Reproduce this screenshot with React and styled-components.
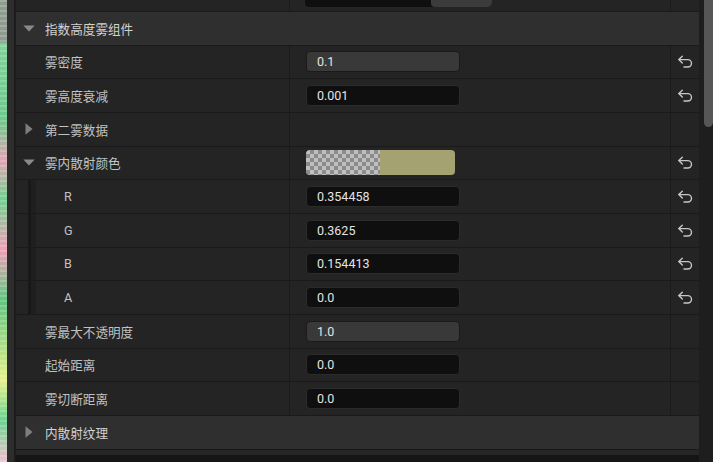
import React from "react";
import styled, { createGlobalStyle } from "styled-components";

const Global = createGlobalStyle`
  html, body { margin: 0; padding: 0; background: #151515; overflow: hidden; }
  * { box-sizing: border-box; }
`;

const Shell = styled.div`
  display: flex;
  width: 713px;
  height: 462px;
  font-family: Roboto, "Noto Sans CJK SC", "Noto Sans", sans-serif;
  font-size: 12.6px;
  color: #c2c2c2;
  overflow: hidden;
`;

const Viewport = styled.div`
  width: 7px;
  flex: none;
  background:
    repeating-linear-gradient(180deg, rgba(255,255,255,0.18) 0 2px, transparent 2px 5px),
    linear-gradient(180deg, #8e9c8f 0, #8e9c8f 42px, #7fd39a 44px, #6cc98a 120px,
      #e2a5b5 160px, #72d08f 200px, #f0a0b8 250px, #5fc67f 300px, #e8f08a 380px, #6ad490 420px, #f1c0d0 462px);
`;

const Gutter = styled.div`
  width: 9px;
  flex: none;
  background: #2d2d2d;
  border-right: 2px solid #1b1b1b;
`;

const Panel = styled.div`
  width: 683px;
  flex: none;
  display: flex;
  flex-direction: column;
  background: #151515;
`;

const Row = styled.div`
  display: grid;
  grid-template-columns: 274px 381px 28px;
  height: ${(p) => p.$h || "33.667px"};
  background: #242424;
  border-bottom: 1px solid #1a1a1a;
  flex: none;
`;

const HeaderRow = styled.div`
  display: flex;
  align-items: center;
  height: 33.667px;
  background: #2f2f2f;
  border-bottom: 1px solid #1a1a1a;
  flex: none;
  color: #d2d2d2;
`;

const Expander = styled.span`
  width: 29px;
  flex: none;
  display: flex;
  align-items: center;
  justify-content: flex-start;
  padding-left: ${(p) => (p.$open ? "7px" : "9px")};
`;

const NameCell = styled.div`
  display: flex;
  align-items: center;
  border-right: 1px solid #1b1b1b;
  padding-left: ${(p) => (p.$indent || p.$tree ? "0" : "29px")};
  overflow: hidden;
`;

const Stripe = styled.span`
  align-self: stretch;
  width: 8px;
  margin-left: 12px;
  margin-right: 28px;
  background: #1f1f1f;
  border-left: 3px solid #181818;
`;

const ValueCell = styled.div`
  display: flex;
  align-items: ${(p) => (p.$bottom ? "flex-end" : "center")};
  padding-left: 16px;
  padding-bottom: ${(p) => (p.$bottom ? "4px" : "0")};
  border-right: 1px solid #1b1b1b;
  overflow: hidden;
`;

const ResetCell = styled.div`
  display: flex;
  align-items: center;
  justify-content: center;
  padding-left: 1px;
`;

const NumField = styled.div`
  width: 154px;
  height: 21px;
  border-radius: 4px;
  display: flex;
  align-items: center;
  padding-left: 10px;
  font-family: Roboto, "Noto Sans", sans-serif;
  font-size: 12.5px;
  color: #e4e4e4;
  background: ${(p) => (p.$slider ? "#393939" : "#0f0f0f")};
  border: 1px solid ${(p) => (p.$slider ? "#1a1a1a" : "#2b2b2b")};
`;

const Swatch = styled.div`
  width: 149px;
  height: 25px;
  border-radius: 4px;
  overflow: hidden;
  display: flex;
`;

const Checker = styled.div`
  width: 74px;
  background-color: #bfbfbf;
  background-image: conic-gradient(#8b8b8b 25%, transparent 0 50%, #8b8b8b 0 75%, transparent 0);
  background-size: 8px 8px;
`;

const Solid = styled.div`
  flex: 1;
  background: ${(p) => p.$color};
`;

const Segmented = styled.div`
  width: 187px;
  height: 22px;
  margin-left: -1px;
  border-radius: 4px;
  background: #0f0f0f;
  display: flex;
  overflow: hidden;
`;

const Segment = styled.div`
  flex: ${(p) => (p.$active ? "0 0 61px" : "1")};
  background: ${(p) => (p.$active ? "#3b3b3b" : "transparent")};
  border-radius: ${(p) => (p.$active ? "4px" : "0")};
`;

const Filler = styled.div`
  height: 5px;
  background: #262626;
  flex: none;
`;

const Scrollbar = styled.div`
  width: 14px;
  flex: none;
  background: #1e1e1e;
  display: flex;
  justify-content: flex-end;
`;

const Thumb = styled.div`
  width: 9px;
  height: 127px;
  background: #565656;
  border-radius: 0 0 5px 5px;
`;

const Label = styled.span`
  white-space: nowrap;
`;

function TriDown() {
  return (
    <svg width="12" height="7" viewBox="0 0 12 7">
      <path d="M0.3 0.5 H11.7 L6 6.6 Z" fill="#8a8a8a" />
    </svg>
  );
}

function TriRight() {
  return (
    <svg width="8" height="12" viewBox="0 0 8 12">
      <path d="M0.5 0.3 L7.6 6 L0.5 11.7 Z" fill="#7e7e7e" />
    </svg>
  );
}

function ResetIcon() {
  return (
    <svg width="17" height="13" viewBox="0 0 17 13" fill="none">
      <path d="M5.3 1.2 L1.8 4.6 L5.3 8" stroke="#c6c6c6" strokeWidth="1.4" strokeLinecap="round" strokeLinejoin="round" />
      <path d="M2 4.6 H10.8 A3.7 3.7 0 0 1 10.8 12 H7" stroke="#c6c6c6" strokeWidth="1.4" strokeLinecap="round" />
    </svg>
  );
}

function PropRow({ label, value, slider, reset = true, indent }) {
  return (
    <Row>
      <NameCell $indent={indent}>
        {indent && <Stripe />}
        <Label>{label}</Label>
      </NameCell>
      <ValueCell>{value !== undefined && <NumField $slider={slider}>{value}</NumField>}</ValueCell>
      <ResetCell>{reset && <ResetIcon />}</ResetCell>
    </Row>
  );
}

export default function App() {
  return (
    <>
      <Global />
      <Shell>
        <Viewport />
        <Gutter />
        <Panel>
          <Row $h="12px">
            <NameCell />
            <ValueCell $bottom>
              <Segmented>
                <Segment />
                <Segment />
                <Segment $active />
              </Segmented>
            </ValueCell>
            <ResetCell />
          </Row>
          <HeaderRow>
            <Expander $open><TriDown /></Expander>
            <Label>指数高度雾组件</Label>
          </HeaderRow>
          <PropRow label="雾密度" value="0.1" slider />
          <PropRow label="雾高度衰减" value="0.001" />
          <Row>
            <NameCell $tree>
              <Expander><TriRight /></Expander>
              <Label>第二雾数据</Label>
            </NameCell>
            <ValueCell />
            <ResetCell />
          </Row>
          <Row>
            <NameCell $tree>
              <Expander $open><TriDown /></Expander>
              <Label>雾内散射颜色</Label>
            </NameCell>
            <ValueCell>
              <Swatch>
                <Checker />
                <Solid $color="#a3a270" />
              </Swatch>
            </ValueCell>
            <ResetCell><ResetIcon /></ResetCell>
          </Row>
          <PropRow indent label="R" value="0.354458" />
          <PropRow indent label="G" value="0.3625" />
          <PropRow indent label="B" value="0.154413" />
          <PropRow indent label="A" value="0.0" />
          <PropRow label="雾最大不透明度" value="1.0" slider reset={false} />
          <PropRow label="起始距离" value="0.0" reset={false} />
          <PropRow label="雾切断距离" value="0.0" reset={false} />
          <HeaderRow>
            <Expander><TriRight /></Expander>
            <Label>内散射纹理</Label>
          </HeaderRow>
          <Filler />
        </Panel>
        <Scrollbar>
          <Thumb />
        </Scrollbar>
      </Shell>
    </>
  );
}
